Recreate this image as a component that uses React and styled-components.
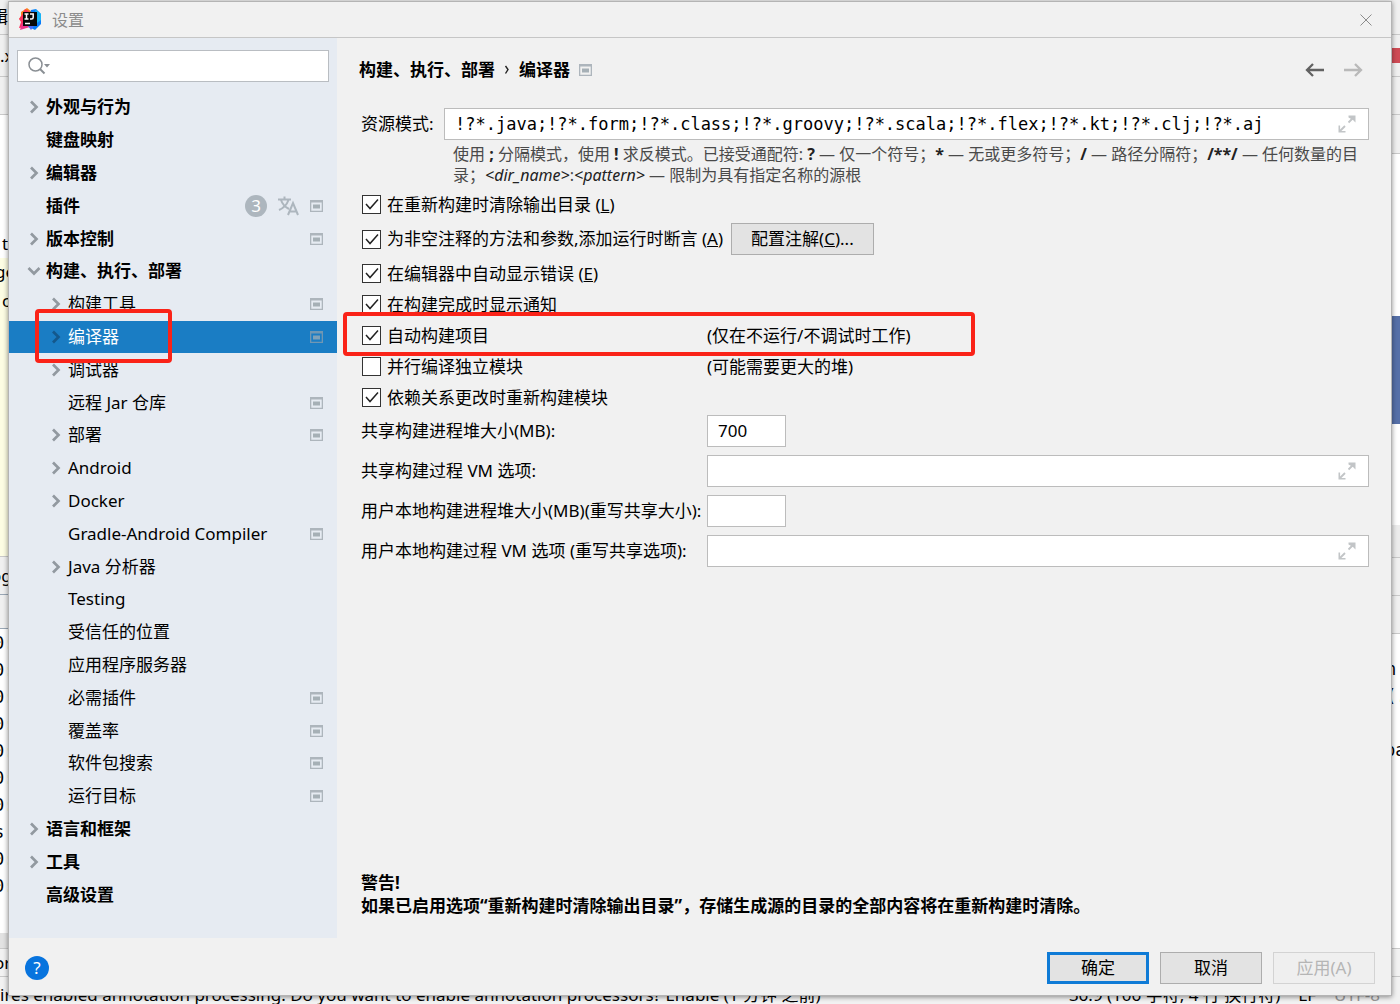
import React, { useState } from "react";
import styled, { createGlobalStyle } from "styled-components";

const GlobalStyle = createGlobalStyle`
  * {
    box-sizing: border-box;
  }

  body {
    margin: 0;
    overflow: hidden;
    color: #000;
    font-family: "Noto Sans", "Noto Sans CJK SC", sans-serif;
    font-size: 17px;
    line-height: 24px;
  }

  button,
  input {
    font: inherit;
    color: inherit;
  }
`;

const Desktop = styled.div`
  position: relative;
  display: flex;
  min-height: 100vh;
  padding: 1px 8px 8px;
  background: #f2f2f2;
`;

/* The editor window that is left visible around the dialog */
const Backdrop = styled.div`
  position: absolute;
  inset: 0;
  display: flex;
  flex-direction: column;
  overflow: hidden;
`;

const BackdropColumns = styled.div`
  display: flex;
  justify-content: space-between;
`;

const Strip = styled.div`
  width: 8px;
`;

const Segment = styled.div`
  display: flex;
  align-items: center;
  height: ${({ $h }) => $h}px;
  overflow: hidden;
  background: ${({ $bg }) => $bg || "#fff"};
  border-bottom: ${({ $line }) => ($line ? `1px solid ${$line}` : "none")};
  white-space: nowrap;
`;

const Clipped = styled.span`
  margin-left: ${({ $shift }) => $shift || 0}px;
  font-family: ${({ $mono }) =>
    $mono ? '"DejaVu Sans Mono", monospace' : "inherit"};
`;

const StatusBar = styled.div`
  display: flex;
  justify-content: space-between;
  height: 27px;
  line-height: 35px;
  white-space: nowrap;
`;

const StatusGroup = styled.div`
  display: flex;
  gap: 18px;
  padding-right: 20px;
`;

const Faded = styled.span`
  color: #999;
`;

const Dialog = styled.div`
  position: relative;
  display: flex;
  flex: 1;
  flex-direction: column;
  min-width: 0;
  background: #f1f1f1;
  border: 1px solid #b4b4b4;
  box-shadow: 0 1px 5px rgba(0, 0, 0, 0.45);
`;

const TitleBar = styled.header`
  display: flex;
  align-items: center;
  height: 36px;
  gap: 10px;
  padding: 0 19px 0 10px;
  border-bottom: 1px solid #c6c6c6;
  color: #8c8c8c;
`;

const Title = styled.h1`
  flex: 1;
  margin: 0;
  font-size: 16px;
  font-weight: 400;
`;

const IconButton = styled.button`
  display: flex;
  padding: 0;
  border: 0;
  background: none;
`;

const Body = styled.div`
  display: flex;
  flex: 1;
`;

const Sidebar = styled.aside`
  display: flex;
  flex-direction: column;
  width: 328px;
  padding: 12px 0 27px;
  background: #e6ebf2;
`;

const SearchBox = styled.label`
  display: flex;
  align-items: center;
  height: 32px;
  margin: 0 8px 9px;
  padding-left: 10px;
  border: 1px solid #b9bdc2;
  background: #fff;
`;

const SearchInput = styled.input`
  flex: 1;
  min-width: 0;
  border: 0;
  outline: 0;
  background: none;
`;

const Tree = styled.ul`
  display: flex;
  flex: 1;
  flex-direction: column;
  margin: 0;
  padding: 0;
  list-style: none;
`;

const TreeItem = styled.li`
  position: relative;
  display: flex;
  flex: 1;
`;

const TreeRow = styled.button`
  display: flex;
  flex: 1;
  align-items: center;
  gap: 11px;
  padding: 0 14px 0 ${({ $child }) => ($child ? 40 : 18)}px;
  border: 0;
  background: ${({ $selected }) => ($selected ? "#1a7dc4" : "none")};
  color: ${({ $selected }) => ($selected ? "#fff" : "#000")};
  font-weight: ${({ $child }) => ($child ? 400 : 700)};
  text-align: left;
`;

const TreeLabel = styled.span`
  display: flex;
  flex: 1;
  align-items: center;
  gap: 5px;
`;

const ChevronSlot = styled.span`
  display: flex;
  justify-content: center;
  width: 14px;
`;

const Badge = styled.span`
  width: 22px;
  height: 22px;
  border-radius: 50%;
  background: #adb6be;
  color: #fff;
  font-weight: 400;
  line-height: 22px;
  text-align: center;
`;

/* Red frames laid over the rows they point at */
const Highlight = styled.span`
  position: absolute;
  z-index: 1;
  top: ${({ $top }) => $top}px;
  left: ${({ $left }) => $left}px;
  width: ${({ $width }) => $width}px;
  height: ${({ $height }) => $height}px;
  border: 4px solid #fa2318;
  border-radius: 4px;
  pointer-events: none;
`;

const Panel = styled.main`
  display: flex;
  flex: 1;
  flex-direction: column;
  min-width: 0;
  padding: 0 22px 21px 24px;
`;

const PanelHeader = styled.div`
  display: flex;
  align-items: center;
  justify-content: space-between;
  height: 64px;
  margin: 0 0 6px -2px;
`;

const Breadcrumb = styled.h2`
  display: flex;
  align-items: center;
  gap: 9px;
  margin: 0;
  font-size: 17px;
`;

const NavButtons = styled.div`
  display: flex;
  gap: 20px;
  padding-right: 6px;
`;

const PatternRow = styled.div`
  display: grid;
  grid-template-columns: 83px 1fr;
  align-items: center;
`;

const Field = styled.div`
  display: flex;
  align-items: center;
  width: ${({ $short }) => ($short ? "79px" : "auto")};
  height: 32px;
  padding: 0 12px 0 10px;
  border: 1px solid #bcbcbc;
  background: #fff;
`;

const FieldInput = styled.input`
  flex: 1;
  width: 100%;
  min-width: 0;
  padding: 0;
  border: 0;
  outline: 0;
  background: none;
  font-family: ${({ $mono }) =>
    $mono ? '"DejaVu Sans Mono", monospace' : "inherit"};
`;

const Help = styled.p`
  margin: 4px 0 3px;
  padding-left: 92px;
  color: #4a4a4a;
  font-size: 16px;
  line-height: 21px;

  b,
  i {
    color: #222;
  }
`;

const CheckRow = styled.div`
  position: relative;
  display: grid;
  grid-template-columns: ${({ $inline }) =>
    $inline ? "auto 1fr" : "346px 1fr"};
  align-items: center;
  justify-items: start;
  column-gap: ${({ $inline }) => ($inline ? 8 : 0)}px;
  min-height: 31px;
  margin: ${({ $inline }) => ($inline ? "3px 0" : "0")};
`;

const CheckLabel = styled.label`
  display: flex;
  align-items: center;
  gap: 6px;
  padding-left: 1px;
  white-space: nowrap;
`;

const CheckSlot = styled.span`
  display: grid;

  > * {
    grid-area: 1 / 1;
  }

  svg {
    pointer-events: none;
  }
`;

const CheckInput = styled.input`
  width: 19px;
  height: 19px;
  margin: 0;
  appearance: none;
  border: 1px solid #333;
  background: #fff;
`;

const FieldGrid = styled.div`
  display: grid;
  grid-template-columns: 346px 1fr;
  align-items: center;
  row-gap: 8px;
  margin-top: 2px;
`;

const Warning = styled.p`
  margin: auto 0 0;
  font-weight: 700;
  line-height: 23px;
`;

const Footer = styled.footer`
  display: flex;
  align-items: center;
  height: 57px;
  gap: 11px;
  padding: 2px 16px 0;
`;

const HelpButton = styled.button`
  width: 24px;
  height: 24px;
  margin-right: auto;
  padding: 0;
  border: 0;
  border-radius: 50%;
  background: #0874de;
  color: #fff;
  line-height: 24px;
`;

const Button = styled.button`
  min-width: 102px;
  height: 32px;
  padding: 0 19px;
  border: ${({ $primary }) =>
    $primary ? "3px solid #0f7bd6" : "1px solid #adadad"};
  background: #e3e3e3;
  line-height: 24px;

  &:disabled {
    border-color: #d3d3d3;
    background: #efefef;
    color: #b5b5b5;
  }
`;

const LogoIcon = () => (
  <svg width="23" height="23" viewBox="0 0 23 23">
    <path d="M2 4 8 0l5 4-3 9-10-2 2-3z" fill="#fc801d" />
    <path d="m6 1 6 4-4 14-8 1 2-6-2-3 3-4z" fill="#fe315d" />
    <path d="m12 2 5-1 5 5v10l-6 6-8-4z" fill="#087cfa" />
    <path d="m1 22 2-7 8 4z" fill="#f0348c" />
    <path d="m9 18 6 0-3 4z" fill="#4b6bf5" />
    <path d="m16 1 6 5v6l-4 3z" fill="#17b5f5" />
    <path d="M4 4h14v14H4z" fill="#080808" />
    <path
      d="M5.500 6h4M7.500 6v5M5.500 11h4M11 6h3.200v3.500q0 1.500-1.700 1.500H11M6 15.500h5"
      stroke="#fff"
      strokeWidth="1.500"
      fill="none"
    />
  </svg>
);

const CloseIcon = () => (
  <svg width="12" height="12" viewBox="0 0 12 12">
    <path d="m.5.5 11 11m0-11-11 11" stroke="#8c8c8c" fill="none" />
  </svg>
);

const SearchIcon = () => (
  <svg width="24" height="20" viewBox="0 0 24 20">
    <circle cx="7.500" cy="8.500" r="6.500" stroke="#8a8f94" strokeWidth="1.500" fill="none" />
    <path d="m12 13 4.500 4.500" stroke="#8a8f94" strokeWidth="2" />
    <path d="M16 8h6l-3 3.500z" fill="#8a8f94" />
  </svg>
);

const Chevron = ({ open, selected }) => (
  <svg width="14" height="14" viewBox="0 0 14 14">
    <path
      d={open ? "m1.500 4 5.500 5.500L12.500 4" : "m4 1.500 5.500 5.500L4 12.500"}
      stroke={selected ? "#14588c" : "#9299a0"}
      strokeWidth="2.700"
      fill="none"
    />
  </svg>
);

const ProjectIcon = ({ selected }) => (
  <svg width="13" height="12" viewBox="0 0 13 12">
    <path
      d="M0 0h13v12H0zM1.300 2.500v8.200h10.400V2.500z"
      fill={selected ? "#7197b3" : "#adb5bc"}
      fillRule="evenodd"
    />
    <path d="M3 4.500h7v4H3z" fill={selected ? "#7fa1b8" : "#a6b0b6"} />
  </svg>
);

const TranslateIcon = () => (
  <svg width="21" height="20" viewBox="0 0 21 20">
    <g stroke="#adb6be" strokeWidth="2" fill="none">
      <path d="M0 3.500h13M6.500.5v3M3 4q2 6 8 9M10.500 4Q8 11 1 14" />
      <path d="m10 19 5-12 5 12M11.500 15.500h7" />
    </g>
  </svg>
);

const SeparatorIcon = () => (
  <svg width="6" height="10" viewBox="0 0 6 10">
    <path d="m1.500 1 2.500 3.500L1.500 8.500" stroke="#222" strokeWidth="1.400" fill="none" />
  </svg>
);

const ArrowIcon = ({ forward }) => (
  <svg width="19" height="14" viewBox="0 0 19 14">
    <path
      d={forward ? "M0 7h17M11 1l6 6-6 6" : "M19 7H2M8 1 2 7l6 6"}
      stroke={forward ? "#b9b9b9" : "#626262"}
      strokeWidth="2.300"
      fill="none"
    />
  </svg>
);

const ExpandIcon = () => (
  <svg width="18" height="18" viewBox="0 0 18 18">
    <path d="M10.500.500h7v7l-2.500-2.500-4.500-2.500z" fill="#c2c5c7" />
    <path d="m10.500 7.500 5-5M2 16l5-5" stroke="#c2c5c7" strokeWidth="1.800" />
    <path d="M1.300 10.500v6.200h6.200" stroke="#c2c5c7" strokeWidth="1.600" fill="none" />
  </svg>
);

const TickIcon = () => (
  <svg width="19" height="19" viewBox="0 0 19 19">
    <path d="m4 9 4 4.500 8-9" stroke="#222" strokeWidth="1.500" fill="none" />
  </svg>
);

const treeItems = [
  { label: "外观与行为", arrow: true },
  { label: "键盘映射" },
  { label: "编辑器", arrow: true },
  { label: "插件", project: true, count: 3 },
  { label: "版本控制", arrow: true, project: true },
  { label: "构建、执行、部署", arrow: true, open: true },
  { label: "构建工具", child: true, arrow: true, project: true },
  { label: "编译器", child: true, arrow: true, project: true, marked: true },
  { label: "调试器", child: true, arrow: true },
  { label: "远程 Jar 仓库", child: true, project: true },
  { label: "部署", child: true, arrow: true, project: true },
  { label: "Android", child: true, arrow: true },
  { label: "Docker", child: true, arrow: true },
  { label: "Gradle-Android Compiler", child: true, project: true },
  { label: "Java 分析器", child: true, arrow: true },
  { label: "Testing", child: true },
  { label: "受信任的位置", child: true },
  { label: "应用程序服务器", child: true },
  { label: "必需插件", child: true, project: true },
  { label: "覆盖率", child: true, project: true },
  { label: "软件包搜索", child: true, project: true },
  { label: "运行目标", child: true, project: true },
  { label: "语言和框架", arrow: true },
  { label: "工具", arrow: true },
  { label: "高级设置" },
];

const leftSegments = [
  { h: 35, bg: "#f0f0f0", line: "#c9c9c9", text: "辑", shift: -9 },
  { h: 42, bg: "#f0f0f0", line: "#c9c9c9", text: ".x" },
  { h: 38, bg: "#f0f0f0", line: "#c9c9c9" },
  { h: 115 },
  { h: 28, text: "t", shift: 2 },
  { h: 28, bg: "#fdfde3", text: "ge", shift: -5 },
  { h: 30, bg: "#fdfde3", text: "c", shift: 2 },
  { h: 241, bg: "#fdfde3", line: "#c9c9c9" },
  { h: 38, bg: "#f0f0f0", line: "#9aa7b5", text: "og", shift: -9 },
  { h: 34, bg: "#f0f0f0", line: "#9aa7b5" },
  ...["0:", "0:", "0:", "0:", "0:", "0:", "0:", "s", "0:", "0:"].map(
    (text) => ({ h: 27, text, shift: -6, mono: true })
  ),
  { h: 34 },
  { h: 16, bg: "#e2e2e2", line: "#c9c9c9" },
  { h: 28, bg: "#f2f2f2", line: "#c9c9c9", text: "or", shift: -6 },
];

const rightSegments = [
  { h: 35, bg: "#f0f0f0", line: "#c9c9c9" },
  { h: 13, bg: "#f0f0f0" },
  { h: 15, bg: "#cf4b55" },
  { h: 14, bg: "#f0f0f0", line: "#c9c9c9" },
  { h: 38, bg: "#f0f0f0", line: "#c9c9c9" },
  { h: 39, bg: "#f0f0f0", line: "#c9c9c9" },
  { h: 162 },
  { h: 108, bg: "#5670a8" },
  { h: 101 },
  { h: 33, bg: "#ececec", line: "#c9c9c9" },
  { h: 38, bg: "#f0f0f0", line: "#c9c9c9" },
  { h: 38, bg: "#f0f0f0", line: "#c9c9c9" },
  { h: 21 },
  { h: 27, text: "n", shift: -6, mono: true },
  { h: 27, text: "(.", shift: -6, mono: true },
  { h: 27 },
  { h: 27, text: "pa", shift: -7, mono: true },
  { h: 186, line: "#c9c9c9" },
  { h: 28, bg: "#f2f2f2", line: "#c9c9c9" },
];

const BackdropStrip = ({ segments }) => (
  <Strip>
    {segments.map(({ h, bg, line, text, shift, mono }, index) => (
      <Segment key={index} $h={h} $bg={bg} $line={line}>
        {text && (
          <Clipped $shift={shift} $mono={mono}>
            {text}
          </Clipped>
        )}
      </Segment>
    ))}
  </Strip>
);

const CheckOption = ({ id, label, hotkey, note, checked, children, marked }) => {
  const [on, setOn] = useState(checked);

  return (
    <CheckRow $inline={Boolean(children)}>
      <CheckLabel htmlFor={id}>
        <CheckSlot>
          <CheckInput
            id={id}
            type="checkbox"
            checked={on}
            onChange={() => setOn(!on)}
          />
          {on && <TickIcon />}
        </CheckSlot>
        <span>
          {label}
          {hotkey && (
            <>
              {" "}
              (<u>{hotkey}</u>)
            </>
          )}
        </span>
      </CheckLabel>
      {children}
      {note && <span>{note}</span>}
      {marked && <Highlight $top={-8} $left={-18} $width={632} $height={44} />}
    </CheckRow>
  );
};

const TextField = ({ id, label, short, defaultValue }) => (
  <>
    <label htmlFor={id}>{label}</label>
    <Field $short={short}>
      <FieldInput id={id} type="text" defaultValue={defaultValue} />
      {!short && <ExpandIcon />}
    </Field>
  </>
);

const App = () => {
  const [selected, setSelected] = useState("编译器");

  return (
    <>
      <GlobalStyle />
      <Desktop>
        <Backdrop>
          <BackdropColumns>
            <BackdropStrip segments={leftSegments} />
            <BackdropStrip segments={rightSegments} />
          </BackdropColumns>
          <StatusBar>
            <span>
              ires enabled annotation processing. Do you want to enable
              annotation processors? Enable (1 分钟 之前)
            </span>
            <StatusGroup>
              <span>36:9 (106 字符, 4 行 换行符)</span>
              <span>LF</span>
              <Faded>UTF-8</Faded>
            </StatusGroup>
          </StatusBar>
        </Backdrop>

        <Dialog role="dialog" aria-labelledby="dialog-title">
          <TitleBar>
            <LogoIcon />
            <Title id="dialog-title">设置</Title>
            <IconButton aria-label="关闭">
              <CloseIcon />
            </IconButton>
          </TitleBar>

          <Body>
            <Sidebar>
              <SearchBox>
                <SearchIcon />
                <SearchInput type="text" aria-label="搜索" />
              </SearchBox>
              <Tree>
                {treeItems.map((item) => {
                  const isSelected = item.label === selected;
                  return (
                    <TreeItem key={item.label}>
                      <TreeRow
                        $child={item.child}
                        $selected={isSelected}
                        onClick={() => setSelected(item.label)}
                      >
                        <TreeLabel>
                          <ChevronSlot>
                            {item.arrow && (
                              <Chevron open={item.open} selected={isSelected} />
                            )}
                          </ChevronSlot>
                          {item.label}
                        </TreeLabel>
                        {item.count && (
                          <>
                            <Badge>{item.count}</Badge>
                            <TranslateIcon />
                          </>
                        )}
                        {item.project && <ProjectIcon selected={isSelected} />}
                      </TreeRow>
                      {item.marked && (
                        <Highlight $top={-12} $left={26} $width={137} $height={54} />
                      )}
                    </TreeItem>
                  );
                })}
              </Tree>
            </Sidebar>

            <Panel>
              <PanelHeader>
                <Breadcrumb>
                  <span>构建、执行、部署</span>
                  <SeparatorIcon />
                  <span>编译器</span>
                  <ProjectIcon />
                </Breadcrumb>
                <NavButtons>
                  <IconButton aria-label="后退">
                    <ArrowIcon />
                  </IconButton>
                  <IconButton aria-label="前进">
                    <ArrowIcon forward />
                  </IconButton>
                </NavButtons>
              </PanelHeader>

              <PatternRow>
                <label htmlFor="patterns">资源模式:</label>
                <Field>
                  <FieldInput
                    id="patterns"
                    type="text"
                    $mono
                    defaultValue="!?*.java;!?*.form;!?*.class;!?*.groovy;!?*.scala;!?*.flex;!?*.kt;!?*.clj;!?*.aj"
                  />
                  <ExpandIcon />
                </Field>
              </PatternRow>
              <Help>
                使用 <b>;</b> 分隔模式，使用 <b>!</b> 求反模式。已接受通配符: <b>?</b> —
                仅一个符号；<b>*</b> — 无或更多符号；<b>/</b> — 路径分隔符；<b>/**/</b> —
                任何数量的目录；<i>&lt;dir_name&gt;</i>:<i>&lt;pattern&gt;</i> —
                限制为具有指定名称的源根
              </Help>

              <CheckOption id="clear" label="在重新构建时清除输出目录" hotkey="L" checked />
              <CheckOption
                id="assertions"
                label="为非空注释的方法和参数,添加运行时断言"
                hotkey="A"
                checked
              >
                <Button>
                  配置注解(<u>C</u>)...
                </Button>
              </CheckOption>
              <CheckOption id="errors" label="在编辑器中自动显示错误" hotkey="E" checked />
              <CheckOption id="notify" label="在构建完成时显示通知" checked />
              <CheckOption
                id="auto"
                label="自动构建项目"
                note="(仅在不运行/不调试时工作)"
                checked
                marked
              />
              <CheckOption
                id="parallel"
                label="并行编译独立模块"
                note="(可能需要更大的堆)"
                checked={false}
              />
              <CheckOption id="rebuild" label="依赖关系更改时重新构建模块" checked />

              <FieldGrid>
                <TextField id="heap" label="共享构建进程堆大小(MB):" short defaultValue="700" />
                <TextField id="vm" label="共享构建过程 VM 选项:" />
                <TextField id="user-heap" label="用户本地构建进程堆大小(MB)(重写共享大小):" short />
                <TextField id="user-vm" label="用户本地构建过程 VM 选项 (重写共享选项):" />
              </FieldGrid>

              <Warning>
                警告!
                <br />
                如果已启用选项“重新构建时清除输出目录”，存储生成源的目录的全部内容将在重新构建时清除。
              </Warning>
            </Panel>
          </Body>

          <Footer>
            <HelpButton aria-label="帮助">?</HelpButton>
            <Button $primary>确定</Button>
            <Button>取消</Button>
            <Button disabled>应用(A)</Button>
          </Footer>
        </Dialog>
      </Desktop>
    </>
  );
};

export default App;
